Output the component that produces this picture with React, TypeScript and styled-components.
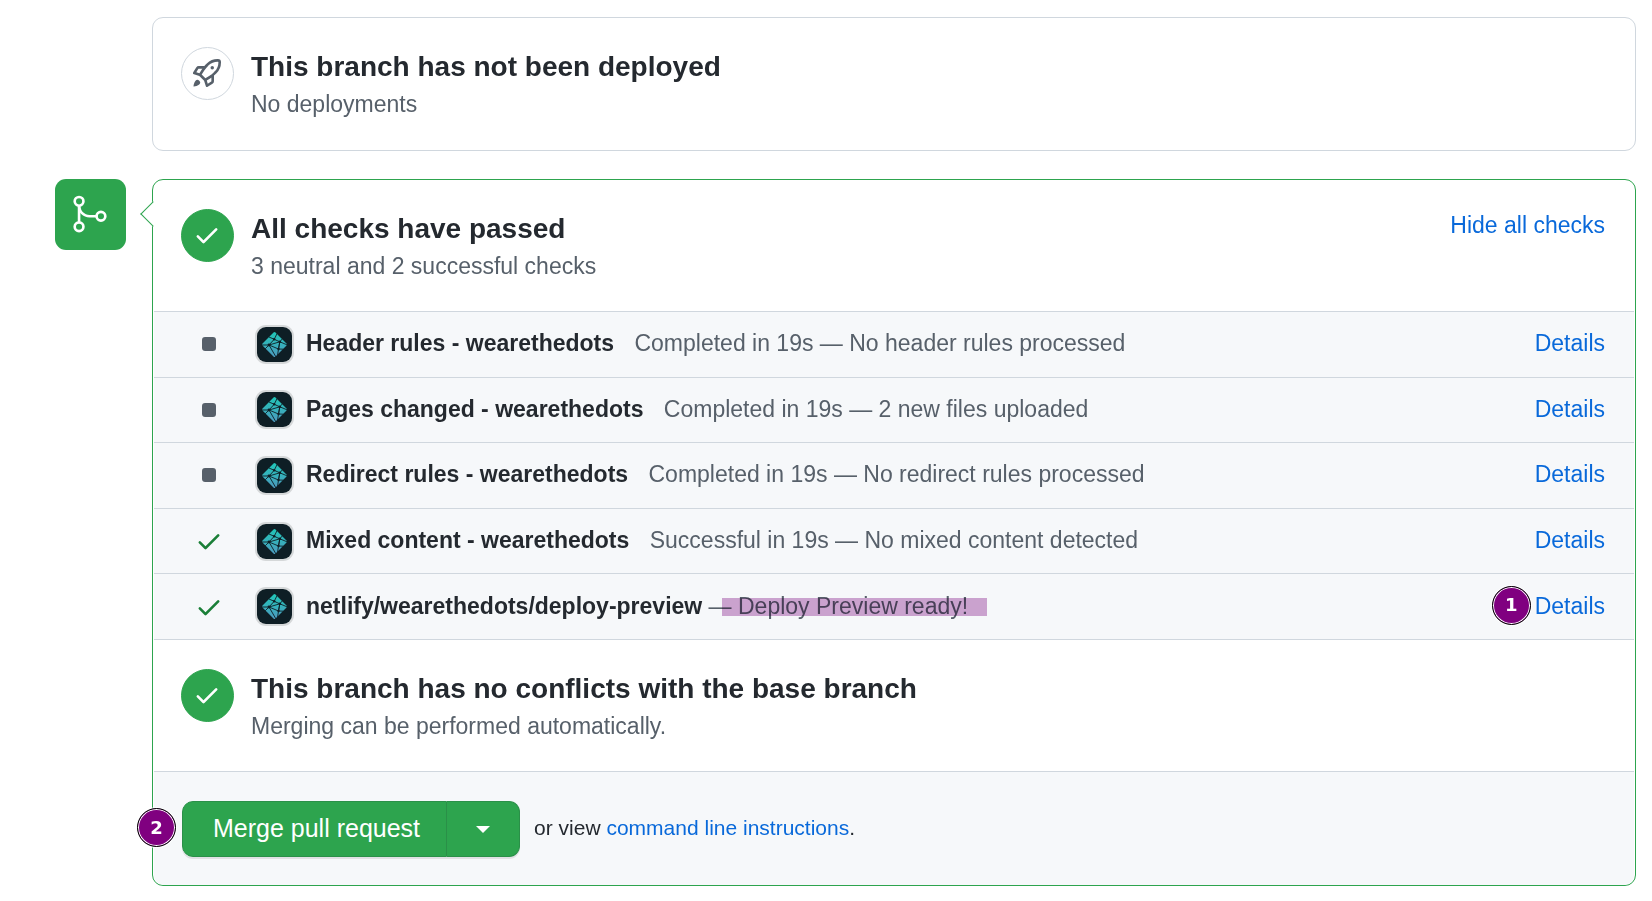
import React from 'react';
import styled, { createGlobalStyle } from 'styled-components';

const color = {
  text: '#24292f',
  muted: '#57606a',
  link: '#0969da',
  green: '#2da44e',
  checkGreen: '#1a7f37',
  border: '#d0d7de',
  subtle: '#f6f8fa',
  marker: '#800080',
};

const GlobalStyle = createGlobalStyle`
  * { box-sizing: border-box; }
  body {
    margin: 0;
    background: #fff;
    color: ${color.text};
    font-family: "Liberation Sans", Arial, sans-serif;
    font-size: 23px;
  }
`;

const Timeline = styled.main`
  display: grid;
  grid-template-columns: 71px minmax(0, 1fr);
  gap: 28px 26px;
  padding: 17px 16px 14px 55px;
`;

const Card = styled.section<{ $active?: boolean }>`
  position: relative;
  grid-column: 2;
  padding: ${p => (p.$active ? '0 1px' : '0 1px 1px')};
  border: 1px solid ${p => (p.$active ? color.green : color.border)};
  border-radius: 11px;
  background: #fff;
`;

const Pointer = styled.span`
  position: absolute;
  top: 25px;
  left: -9px;
  width: 18px;
  height: 18px;
  border: solid ${color.green};
  border-width: 0 0 1px 1px;
  background: #fff;
  transform: rotate(45deg);
`;

const MergeBadge = styled.div`
  display: flex;
  align-items: center;
  justify-content: center;
  width: 71px;
  height: 71px;
  padding: 0 1px 1px 0;
  border-radius: 11px;
  background: ${color.green};
  color: #fff;
`;

const Status = styled.div<{ $divided?: boolean }>`
  display: flex;
  align-items: flex-start;
  gap: 17px;
  padding: 29px 29px 28px 27px;
  border-top: ${p => (p.$divided ? `1px solid ${color.border}` : '0')};
`;

const StatusCircle = styled.div<{ $done?: boolean }>`
  display: flex;
  flex: none;
  align-items: center;
  justify-content: center;
  width: 53px;
  height: 53px;
  padding: 0 1px 1px 0;
  border: 1px solid ${p => (p.$done ? color.green : color.border)};
  border-radius: 50%;
  background: ${p => (p.$done ? color.green : '#fff')};
  color: ${p => (p.$done ? '#fff' : color.muted)};
`;

const StatusText = styled.div`
  flex: 1;
`;

const Title = styled.h3`
  margin: 0;
  font-size: 28px;
  line-height: 40px;
  font-weight: 700;
`;

const Subtitle = styled.p`
  margin: 0;
  line-height: 34px;
  color: ${color.muted};
`;

const TextButton = styled.button`
  padding: 0;
  border: 0;
  background: none;
  color: ${color.link};
  font: inherit;
  line-height: 32px;
  cursor: pointer;
`;

const Link = styled.a`
  color: ${color.link};
  text-decoration: none;
`;

const CheckList = styled.ul`
  display: grid;
  grid-auto-rows: 1fr;
  height: 328px;
  margin: 0;
  padding: 0;
  list-style: none;
  background: ${color.subtle};
`;

const CheckRow = styled.li`
  display: flex;
  align-items: center;
  padding: 0 29px 0 41px;
  border-top: 1px solid ${color.border};
`;

const StateIcon = styled.span`
  display: flex;
  margin-right: 34px;
`;

const Avatar = styled.span`
  display: flex;
  margin-right: 14px;
  border-radius: 9px;
  background: #0e1e25;
  box-shadow: 0 0 0 2px rgba(27, 31, 36, 0.15);
`;

const CheckText = styled.div`
  flex: 1;
  line-height: 34px;
  padding-bottom: 2px;
`;

const CheckName = styled.strong<{ $spaced: boolean }>`
  margin-right: ${p => (p.$spaced ? '14px' : '0')};
`;

const Description = styled.span`
  position: relative;
  color: ${color.muted};
`;

const Highlight = styled.span`
  position: absolute;
  top: 5px;
  right: -19px;
  left: 13px;
  height: 18px;
  background: #d2a7d2;
  mix-blend-mode: multiply;
`;

const RowAction = styled.div`
  position: relative;
  line-height: 34px;
  padding-bottom: 2px;
`;

const Marker = styled.span<{ $gap: number }>`
  position: absolute;
  top: 50%;
  right: 100%;
  display: flex;
  align-items: center;
  justify-content: center;
  width: 39px;
  height: 39px;
  margin: -21px ${p => p.$gap}px 0 0;
  border: 1px solid #000;
  border-radius: 50%;
  background: ${color.marker};
  box-shadow: inset 0 0 0 1px #fff, 0 0 0 1px rgba(255, 255, 255, 0.8);
  color: #fff;
  font: 700 18px/20px "DejaVu Sans", sans-serif;
`;

const Footer = styled.footer`
  display: flex;
  align-items: center;
  gap: 14px;
  padding: 29px 28px 28px;
  border-top: 1px solid ${color.border};
  border-radius: 0 0 10px 10px;
  background: ${color.subtle};
  font-size: 21px;
`;

const ButtonGroup = styled.div`
  position: relative;
  display: flex;
  height: 56px;
  border-radius: 11px;
  box-shadow: 0 2px 0 rgba(27, 31, 36, 0.1);
`;

const MergeButton = styled.button`
  padding: 0 26px 2px 30px;
  border: 1px solid #2a9048;
  border-radius: 11px 0 0 11px;
  background: ${color.green};
  color: #fff;
  font: 25px "Liberation Sans", Arial, sans-serif;
  cursor: pointer;
`;

const MenuButton = styled.button`
  display: flex;
  align-items: center;
  justify-content: center;
  width: 73px;
  padding: 0;
  border: 1px solid #2a9048;
  border-left: 0;
  border-radius: 0 11px 11px 0;
  background: ${color.green};
  cursor: pointer;
`;

const Hint = styled.p`
  margin: 0;
  line-height: 32px;
  padding-bottom: 2px;
`;

const Rocket = () => (
  <svg width="28" height="28" viewBox="0 0 16 16" fill="currentColor" aria-hidden="true">
    <path
      fillRule="evenodd"
      d="M14.064 0a8.75 8.75 0 00-6.187 2.563l-.459.458c-.314.314-.616.641-.904.979H3.31a1.75 1.75 0 00-1.49.833L.11 7.607a.75.75 0 00.418 1.11l3.102.954c.037.051.079.1.124.145l2.429 2.428c.046.046.094.088.145.125l.954 3.102a.75.75 0 001.11.418l2.774-1.707a1.75 1.75 0 00.833-1.49V9.485c.338-.288.665-.59.979-.904l.458-.459A8.75 8.75 0 0016 1.936V1.75A1.75 1.75 0 0014.25 0h-.186zM10.5 10.625c-.088.06-.177.118-.266.175l-2.35 1.521.548 1.783 1.949-1.2a.25.25 0 00.119-.213v-2.066zM3.678 8.116L5.2 5.766c.058-.09.117-.178.176-.266H3.309a.25.25 0 00-.213.119l-1.2 1.95 1.782.547zm5.26-4.493A7.25 7.25 0 0114.063 1.5h.186a.25.25 0 01.25.25v.186a7.25 7.25 0 01-2.123 5.127l-.459.458a15.21 15.21 0 01-2.499 2.02l-2.317 1.5-2.143-2.143 1.5-2.317a15.25 15.25 0 012.02-2.5l.458-.458h.002zM12 5a1 1 0 11-2 0 1 1 0 012 0zm-8.44 9.56a1.5 1.5 0 10-2.12-2.12c-.734.73-1.047 2.332-1.15 3.003a.23.23 0 00.265.265c.671-.103 2.273-.416 3.005-1.148z"
    />
  </svg>
);

const Check = () => (
  <svg width="28" height="28" viewBox="0 0 16 16" fill="currentColor" aria-hidden="true">
    <path d="M13.78 4.22a.75.75 0 010 1.06l-7.25 7.25a.75.75 0 01-1.06 0L2.22 9.28a.75.75 0 011.06-1.06L6 10.94l6.72-6.72a.75.75 0 011.06 0z" />
  </svg>
);

const Square = () => (
  <svg width="28" height="28" viewBox="0 0 16 16" fill="currentColor" aria-hidden="true">
    <path d="M5.75 4A1.75 1.75 0 004 5.75v4.5c0 .966.784 1.75 1.75 1.75h4.5A1.75 1.75 0 0012 10.25v-4.5A1.75 1.75 0 0010.25 4h-4.5z" />
  </svg>
);

const GitMerge = () => (
  <svg width="42" height="42" viewBox="0 0 24 24" fill="currentColor" aria-hidden="true">
    <path
      fillRule="evenodd"
      d="M5.75 21a1.75 1.75 0 110-3.5 1.75 1.75 0 010 3.5zM2.5 19.25a3.25 3.25 0 106.5 0 3.25 3.25 0 00-6.5 0zM5.75 6.5a1.75 1.75 0 110-3.5 1.75 1.75 0 010 3.5zM2.5 4.75a3.25 3.25 0 106.5 0 3.25 3.25 0 00-6.5 0zM18.25 15a1.75 1.75 0 110-3.5 1.75 1.75 0 010 3.5zM15 13.25a3.25 3.25 0 106.5 0 3.25 3.25 0 00-6.5 0z"
    />
    <path fillRule="evenodd" d="M6.5 7.25c0 2.9 2.35 5.25 5.25 5.25h4.5V14h-4.5A6.75 6.75 0 015 7.25h1.5z" />
    <path fillRule="evenodd" d="M5.75 16.75A.75.75 0 006.5 16V8A.75.75 0 005 8v8c0 .414.336.75.75.75z" />
  </svg>
);

const NetlifyLogo = ({ id }: { id: string }) => (
  <svg width="35" height="35" viewBox="0 0 35 35" aria-hidden="true">
    <defs>
      <linearGradient id={id} x1="0" y1="0" x2="0" y2="1">
        <stop offset="0" stopColor="#20c6b7" />
        <stop offset="1" stopColor="#4d9abf" />
      </linearGradient>
    </defs>
    <path
      d="M16.500 5.400q1-1 2 0l11 11.100q1 1 0 2l-11 11.100q-1 1-2 0l-11-11.100q-1-1 0-2z"
      fill={`url(#${id})`}
    />
    <g stroke="#0e1e25" strokeWidth="0.9" fill="none">
      <path d="M12 10l5.200 2.300 5.600 2.500 7.200 3M17.200 12.300l3-6M22.800 14.800l3-3.500M17.200 12.300L12 18l10.800-3.200L21.500 22 12 18H4.500M12 18l-3.800 3.800M12 18l7 12M22.800 14.800L21.500 22l-1 6.500M21.500 22l5 .2" />
    </g>
    <g fill="#0e1e25">
      <circle cx="17.200" cy="12.300" r="1.200" />
      <circle cx="12" cy="18" r="1.400" />
      <circle cx="22.800" cy="14.800" r="1.300" />
      <circle cx="21.500" cy="22" r="1.200" />
    </g>
  </svg>
);

type CheckItem = { name: string; description: string; passed?: boolean; commit?: boolean };

const checks: CheckItem[] = [
  { name: 'Header rules - wearethedots', description: 'Completed in 19s — No header rules processed' },
  { name: 'Pages changed - wearethedots', description: 'Completed in 19s — 2 new files uploaded' },
  { name: 'Redirect rules - wearethedots', description: 'Completed in 19s — No redirect rules processed' },
  { name: 'Mixed content - wearethedots', description: 'Successful in 19s — No mixed content detected', passed: true },
  { name: 'netlify/wearethedots/deploy-preview', description: '— Deploy Preview ready!', passed: true, commit: true },
];

const CheckEntry = ({ item, id }: { item: CheckItem; id: string }) => (
  <CheckRow>
    <StateIcon style={{ color: item.passed ? color.checkGreen : color.muted }}>
      {item.passed ? <Check /> : <Square />}
    </StateIcon>
    <Avatar>
      <NetlifyLogo id={id} />
    </Avatar>
    <CheckText>
      <CheckName $spaced={!item.commit}>{item.name}</CheckName>{' '}
      <Description>
        {item.description}
        {item.commit && <Highlight />}
      </Description>
    </CheckText>
    <RowAction>
      {item.commit && <Marker $gap={4}>1</Marker>}
      <Link href="#details">Details</Link>
    </RowAction>
  </CheckRow>
);

export default function App() {
  return (
    <>
      <GlobalStyle />
      <Timeline>
        <Card>
          <Status>
            <StatusCircle>
              <Rocket />
            </StatusCircle>
            <StatusText>
              <Title>This branch has not been deployed</Title>
              <Subtitle>No deployments</Subtitle>
            </StatusText>
          </Status>
        </Card>

        <MergeBadge>
          <GitMerge />
        </MergeBadge>
        <Card $active>
          <Pointer />
          <Status>
            <StatusCircle $done>
              <Check />
            </StatusCircle>
            <StatusText>
              <Title>All checks have passed</Title>
              <Subtitle>3 neutral and 2 successful checks</Subtitle>
            </StatusText>
            <TextButton type="button">Hide all checks</TextButton>
          </Status>

          <CheckList>
            {checks.map((item, index) => (
              <CheckEntry key={item.name} item={item} id={`netlify-${index}`} />
            ))}
          </CheckList>

          <Status $divided>
            <StatusCircle $done>
              <Check />
            </StatusCircle>
            <StatusText>
              <Title>This branch has no conflicts with the base branch</Title>
              <Subtitle>Merging can be performed automatically.</Subtitle>
            </StatusText>
          </Status>

          <Footer>
            <ButtonGroup>
              <Marker $gap={6}>2</Marker>
              <MergeButton type="button">Merge pull request</MergeButton>
              <MenuButton type="button" aria-label="Select merge method">
                <svg width="14" height="7" viewBox="0 0 14 7" aria-hidden="true">
                  <path d="M0 0h14L7 7z" fill="#fff" />
                </svg>
              </MenuButton>
            </ButtonGroup>
            <Hint>
              or view <Link href="#command-line">command line instructions</Link>.
            </Hint>
          </Footer>
        </Card>
      </Timeline>
    </>
  );
}
